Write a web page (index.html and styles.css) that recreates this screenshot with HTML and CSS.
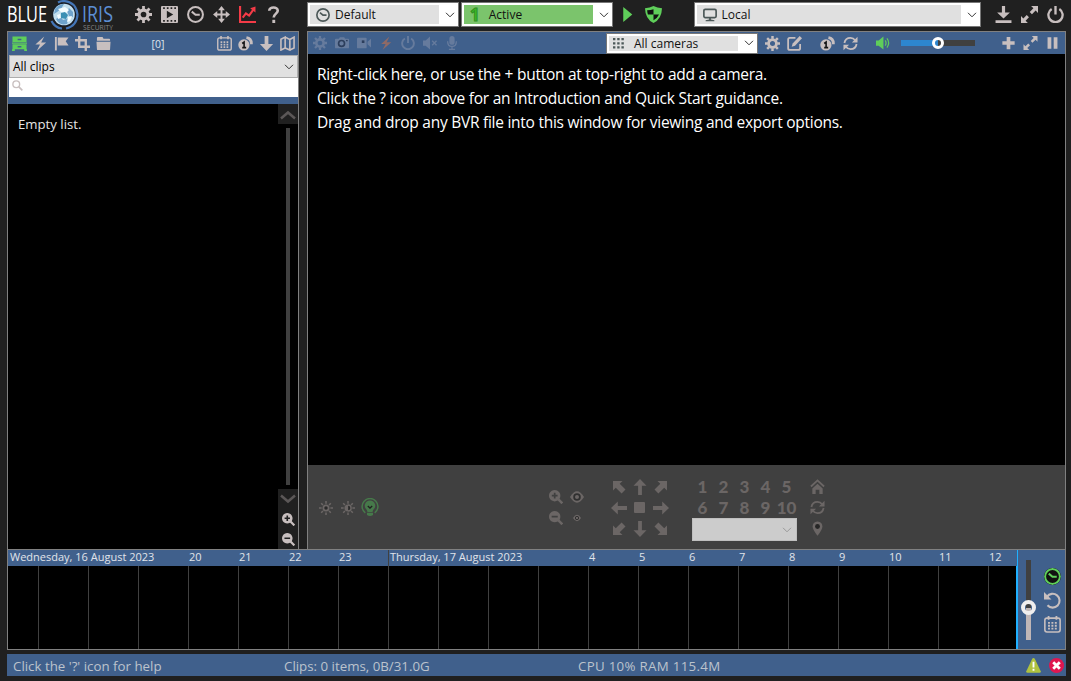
FILE: index.html
```html
<!DOCTYPE html>
<html lang="en">
  <head>
    <meta charset="utf-8">
    <title>Blue Iris</title>
    <link rel="stylesheet" href="styles.css">
  </head>
  <body>
    <!-- icon set -->
    <svg class="defs">
      <symbol id="gear" viewBox="0 0 16 16">
        <circle cx="8" cy="8" r="4.2" fill="none" stroke="currentColor" stroke-width="3"/>
        <path d="M8 0v3M8 13v3M0 8h3M13 8h3M2.300 2.300l2.200 2.200M11.500 11.500l2.200 2.200M13.700 2.300l-2.200 2.200M4.500 11.500l-2.200 2.200" stroke="currentColor" stroke-width="2.600"/>
      </symbol>
      <symbol id="film" viewBox="0 0 16 16">
        <path fill="currentColor" fill-rule="evenodd" d="M1 0h14q1 0 1 1v14q0 1-1 1H1q-1 0-1-1V1q0-1 1-1zM2 1.200v1.600h1.600v-1.600zM5.500 1.200v1.600h1.600v-1.600zM9 1.200v1.600h1.600v-1.600zM12.500 1.200v1.600h1.600v-1.600zM2 13.200v1.600h1.600v-1.600zM5.500 13.200v1.600h1.600v-1.600zM9 13.200v1.600h1.600v-1.600zM12.500 13.200v1.600h1.600v-1.600zM5.500 4.500v7l6-3.500z"/>
      </symbol>
      <symbol id="clock" viewBox="0 0 16 16">
        <circle cx="8" cy="8" r="7" fill="none" stroke="currentColor" stroke-width="1.900"/>
        <path d="M4.500 5.300L8 8.200h4" fill="none" stroke="currentColor" stroke-width="1.900"/>
      </symbol>
      <symbol id="move" viewBox="0 0 16 16">
        <path d="M8 2v12M2 8h12" stroke="currentColor" stroke-width="1.800"/>
        <path fill="currentColor" d="M8 0l3.200 4H4.800zM8 16l3.200-4H4.800zM0 8l4-3.200v6.400zM16 8l-4-3.200v6.400z"/>
      </symbol>
      <symbol id="chart" viewBox="0 0 16 16">
        <path d="M1 0v15h15M3.500 11l3-4 3 2 4-5.500" fill="none" stroke="currentColor" stroke-width="2"/>
        <path fill="currentColor" d="M10.500 2l5-1.500v5.500z"/>
      </symbol>
      <symbol id="question" viewBox="0 0 16 16">
        <path d="M4 4.500C4 .5 12 .2 12 4.500c0 2.500-3.800 3-3.800 6.300" fill="none" stroke="currentColor" stroke-width="2.500"/>
        <rect x="6.900" y="13" width="2.700" height="3" fill="currentColor"/>
      </symbol>
      <symbol id="chevron" viewBox="0 0 10 6">
        <path d="M1 .8l4 4 4-4" fill="none" stroke="currentColor" stroke-width="1"/>
      </symbol>
      <symbol id="play" viewBox="0 0 16 16"><path fill="currentColor" d="M4 1l8.500 7L4 15z"/></symbol>
      <symbol id="shield" viewBox="0 0 16 16">
        <path fill="currentColor" d="M8 0q3.500 2 8 2-.2 10-8 14Q.2 12 0 2q4.500 0 8-2z"/>
        <path fill="#111" d="M8 3v5H2.800q-.6-1.600-.8-4 3.500 0 6-1zM8 8h5.200q-1.500 3.400-5.200 5.500z"/>
      </symbol>
      <symbol id="monitor" viewBox="0 0 16 16">
        <rect x="1" y="1.500" width="14" height="9.500" rx="1.500" fill="none" stroke="currentColor" stroke-width="1.900"/>
        <path fill="currentColor" d="M7 11h2v2l4 1v1H3v-1l4-1z"/>
      </symbol>
      <symbol id="download" viewBox="0 0 16 16">
        <path fill="currentColor" d="M6.500 0h3v6H14l-6 5.800L2 6h4.500zM.5 13.300h15V16H.5z"/>
      </symbol>
      <symbol id="expand" viewBox="0 0 16 16">
        <path fill="currentColor" d="M9.500 0H16v6.500l-2.200-2.200-3.500 3.500-2.100-2.100 3.500-3.500zM6.500 16H0V9.500l2.200 2.200 3.200-3.200 2.100 2.100-3.200 3.200z"/>
      </symbol>
      <symbol id="power" viewBox="0 0 16 16">
        <path d="M4.400 2.800a6.700 6.700 0 1 0 7.200 0M8 0v8" fill="none" stroke="currentColor" stroke-width="2.200"/>
      </symbol>
      <symbol id="cabinet" viewBox="0 0 16 16">
        <path fill="currentColor" fill-rule="evenodd" d="M.5.500h15v6h-15zM6 3v1.500h4V3zM0 7h16v1.200H0zM.5 8.700h15v5.500h-15zM6 10.700v1.500h4v-1.500zM0 14h3v2H0zM13 14h3v2h-3z"/>
      </symbol>
      <symbol id="bolt" viewBox="0 0 16 16"><path fill="currentColor" d="M12 .5L2.500 9h5L4 16l10-9H8.700z"/></symbol>
      <symbol id="flag" viewBox="0 0 16 16">
        <path fill="currentColor" d="M1 1h2v14.500H1zM4 1.500h11.500l-3 4 3 4.500H4z"/>
      </symbol>
      <symbol id="crop" viewBox="0 0 16 16">
        <path d="M4.500 0v11.500H16M0 4.500h11.500V16" fill="none" stroke="currentColor" stroke-width="2.500"/>
      </symbol>
      <symbol id="folder" viewBox="0 0 16 16">
        <path fill="currentColor" d="M1 2q0-1 1-1h5l1 2h6q1 0 1 1v1H1zM.5 6h15l-.5 8q0 1-1 1H2q-1 0-1-1z"/>
      </symbol>
      <symbol id="calendar" viewBox="0 0 16 16">
        <rect x=".8" y="2" width="14.400" height="13" rx="2" fill="none" stroke="currentColor" stroke-width="1.500"/>
        <path d="M4.300 0v3.500M11.700 0v3.500" stroke="currentColor" stroke-width="1.700"/>
        <path d="M3.800 6.500h9M3.800 9.200h9M3.800 11.900h9" stroke="currentColor" stroke-width="1.700" stroke-dasharray="1.800 1.400"/>
      </symbol>
      <symbol id="coins" viewBox="0 0 16 16">
        <path d="M9 1.800q5.700 1 5.200 7" fill="none" stroke="currentColor" stroke-width="3"/>
        <circle cx="6.300" cy="9.500" r="6" fill="currentColor"/>
        <path d="M4.500 8l2-1.500v6M4.500 12.400h4.200" fill="none" stroke="#151515" stroke-width="1.700"/>
      </symbol>
      <symbol id="down" viewBox="0 0 16 16"><path fill="currentColor" d="M6 0h4v8.500h5l-7 7.500-7-7.500h5z"/></symbol>
      <symbol id="map" viewBox="0 0 16 16">
        <path d="M1 3.500L5.500 1.200v11.500L1 15zM5.500 1.200l5 2.500V15l-5-2.300M10.500 3.700L15 1.200v11.500L10.500 15" fill="none" stroke="currentColor" stroke-width="1.700"/>
      </symbol>
      <symbol id="search" viewBox="0 0 16 16">
        <circle cx="6.200" cy="6.200" r="4.900" fill="none" stroke="currentColor" stroke-width="2"/>
        <path d="M10 10l5 5" stroke="currentColor" stroke-width="2.400"/>
      </symbol>
      <symbol id="zoomin" viewBox="0 0 16 16">
        <path fill="currentColor" fill-rule="evenodd" d="M6.500 0a6.500 6.500 0 1 0 .01 0zM5.500 3.200h2v2.300h2.300v2H7.500v2.300h-2V7.500H3.200v-2h2.300z"/>
        <path d="M10.500 10.500l4.700 4.700" stroke="currentColor" stroke-width="2.800"/>
      </symbol>
      <symbol id="zoomout" viewBox="0 0 16 16">
        <path fill="currentColor" fill-rule="evenodd" d="M6.500 0a6.500 6.500 0 1 0 .01 0zM3 5.500h7v2H3z"/>
        <path d="M10.500 10.500l4.700 4.700" stroke="currentColor" stroke-width="2.800"/>
      </symbol>
      <symbol id="camera" viewBox="0 0 16 16">
        <path fill="currentColor" d="M1 3h3.500l1-1.500h5l1 1.500H15q1 0 1 1v9q0 1-1 1H1q-1 0-1-1V4q0-1 1-1z"/>
        <circle cx="7.500" cy="8.500" r="3.400" fill="none" stroke="#2c3e5c" stroke-width="1.900"/>
        <rect x="12.500" y="4.500" width="2" height="1.500" fill="#2c3e5c"/>
      </symbol>
      <symbol id="video" viewBox="0 0 16 16">
        <rect x="0" y="2" width="11" height="12" rx="1" fill="currentColor"/>
        <path fill="currentColor" d="M12 6.500L16 3v10l-4-3.500z"/>
        <rect x="5.500" y="5" width="3" height="3" fill="#2c3e5c"/>
      </symbol>
      <symbol id="mute" viewBox="0 0 16 16">
        <path fill="currentColor" d="M0 5h3l5-4.500v15L3 11H0z"/>
        <path d="M10.500 5.500l5 5M15.500 5.500l-5 5" stroke="currentColor" stroke-width="1.600"/>
      </symbol>
      <symbol id="mic" viewBox="0 0 16 16">
        <rect x="5" y="0" width="6" height="10" rx="3" fill="currentColor"/>
        <path d="M3 6q0 6 5 6t5-6M8 12v3M4.500 15.200h7" fill="none" stroke="currentColor" stroke-width="1.500"/>
      </symbol>
      <symbol id="dots" viewBox="0 0 12 12">
        <path d="M0 1.300h12M0 5.800h12M0 10.300h12" stroke="currentColor" stroke-width="2.500" stroke-dasharray="2.600 2"/>
      </symbol>
      <symbol id="edit" viewBox="0 0 16 16">
        <path d="M9 2H3Q1.200 2 1.200 4v9q0 1.800 1.800 1.800h9q2 0 2-1.800V8.500" fill="none" stroke="currentColor" stroke-width="1.900"/>
        <path fill="currentColor" d="M13.500 0L16 2.500 8.500 10.500 5 11.500 6 8z"/>
      </symbol>
      <symbol id="refresh" viewBox="0 0 16 16">
        <path d="M1.500 7.500Q2.500 2 8 2q3 0 5 2.500M14.500 8.500Q13.500 14 8 14q-3 0-5-2.500" fill="none" stroke="currentColor" stroke-width="1.900"/>
        <path fill="currentColor" d="M15.500.8v6h-6zM.5 15.200v-6h6z"/>
      </symbol>
      <symbol id="volume" viewBox="0 0 16 16">
        <path fill="currentColor" d="M0 5h3l5.500-4.500v15L3 11H0z"/>
        <path d="M10.500 5q2 3 0 6M12.500 2.800q4 5.200 0 10.400" fill="none" stroke="currentColor" stroke-width="1.400"/>
      </symbol>
      <symbol id="plus" viewBox="0 0 16 16"><path d="M8 1v14M1 8h14" stroke="currentColor" stroke-width="4.200"/></symbol>
      <symbol id="pause" viewBox="0 0 16 16"><path d="M4.500 1.500v13M11.500 1.500v13" stroke="currentColor" stroke-width="4.300"/></symbol>
      <symbol id="sun" viewBox="0 0 16 16">
        <circle cx="8" cy="8" r="3" fill="#2a2a2a" stroke="currentColor" stroke-width="2"/>
        <path d="M8 0v3M8 13v3M0 8h3M13 8h3M2.500 2.500l2 2M11.500 11.500l2 2M13.500 2.500l-2 2M4.500 11.500l-2 2" stroke="currentColor" stroke-width="1.800"/>
      </symbol>
      <symbol id="contrast" viewBox="0 0 16 16">
        <path fill="currentColor" d="M8 4a4 4 0 0 0 0 8z"/>
        <path fill="#2a2a2a" d="M8.500 5a3 3 0 0 1 0 6z"/>
        <path d="M8 4.500a3.500 3.500 0 0 1 0 7M8 0v3M8 13v3M0 8h3M13 8h3M2.500 2.500l2 2M11.500 11.500l2 2M13.500 2.500l-2 2M4.500 11.500l-2 2" fill="none" stroke="currentColor" stroke-width="1.700"/>
      </symbol>
      <symbol id="bulb" viewBox="0 0 18 18">
        <path d="M4.300 14.800a7.900 7.900 0 1 1 9.400 0" fill="none" stroke="currentColor" stroke-width="1.500"/>
        <path fill="currentColor" d="M9 2.500a5.200 5.200 0 0 1 3.200 9.300l-.7 2.200h-5l-.7-2.200A5.200 5.200 0 0 1 9 2.500zM6 14.700h6V17q-3 1.800-6 0z"/>
        <path d="M6.800 8l2.200 2 2.200-2" fill="none" stroke="#202020" stroke-width="1.300"/>
      </symbol>
      <symbol id="eye" viewBox="0 0 16 16">
        <path fill="currentColor" d="M0 8q8-13 16 0-8 13-16 0z"/>
        <circle cx="8" cy="8" r="3.300" fill="#6b6665" stroke="#303030" stroke-width="2"/>
      </symbol>
      <symbol id="arrow" viewBox="0 0 16 16"><path fill="currentColor" d="M8 0l6.500 6.800H9.900V16H6.100V6.800H1.500z"/></symbol>
      <symbol id="diag" viewBox="0 0 16 16"><path fill="currentColor" d="M2 2h9.500L8.700 4.800l5.800 5.800-3.900 3.900-5.800-5.800L2 11.500z"/></symbol>
      <symbol id="home" viewBox="0 0 16 16">
        <path d="M1 8l7-6.500L15 8" fill="none" stroke="currentColor" stroke-width="2"/>
        <path fill="currentColor" d="M8 5l5.500 5v6H10v-4.500H6V16H2.500v-6z"/>
      </symbol>
      <symbol id="pin" viewBox="0 0 16 16">
        <path fill="currentColor" d="M8 .5q5.200.3 5.200 5.300Q13.200 9 8 15.800 2.800 9 2.800 5.800 2.800.8 8 .5z"/>
        <circle cx="8" cy="5.800" r="2.600" fill="#262626"/>
      </symbol>
      <symbol id="undo" viewBox="0 0 16 16">
        <path d="M2.800 4.500A6.500 6.500 0 1 1 3.300 12.500" fill="none" stroke="currentColor" stroke-width="2"/>
        <path fill="currentColor" d="M0 0v7h7z"/>
      </symbol>
    </svg>

    <div class="topbar">
      <svg class="logo" viewBox="0 0 108 31">
        <text class="logo-blue" x="0" y="22" textLength="40" lengthAdjust="spacingAndGlyphs">BLUE</text>
        <circle cx="57" cy="14.500" r="11.500" fill="#10192c"/>
        <circle cx="57" cy="14.500" r="10.800" fill="#c3dfee"/>
        <path d="M48 9q4-5 9-5l-3 5-4 3-3 2zM49 19l4-3 3 4 6-2-2 6q-8 2-11-5zM62 8l4 4v5l-4-1-2-5z" fill="#6fa3cc"/>
        <path d="M51 9l7-2 4 3-3 3-5-1zM50 15l3-1 1 4-3 1zM61 17l4-1-2 5-3 1z" fill="#f4fcff"/>
        <path d="M54 13l4-1 3 3-2 4-5-1z" fill="#3b8fb4"/>
        <path d="M51 2.500A13.500 13.500 0 0 1 57 1Q69 2 70.500 14.500 70 26 59 28.500M55 28.500Q48 28 44.500 21" fill="none" stroke="#4476b8" stroke-width="2.200"/>
        <text class="logo-iris" x="75" y="22" textLength="31" lengthAdjust="spacingAndGlyphs">IRIS</text>
        <text class="logo-security" x="76" y="30" textLength="30" lengthAdjust="spacingAndGlyphs">SECURITY</text>
      </svg>
      <div class="icons main-icons">
        <svg><use href="#gear"/></svg>
        <svg><use href="#film"/></svg>
        <svg><use href="#clock"/></svg>
        <svg><use href="#move"/></svg>
        <svg class="red"><use href="#chart"/></svg>
        <svg><use href="#question"/></svg>
      </div>
      <div class="select profile">
        <div class="value"><svg><use href="#clock"/></svg>Default</div>
        <svg class="chevron"><use href="#chevron"/></svg>
      </div>
      <div class="select schedule">
        <div class="value"><span class="one">1</span>Active</div>
        <svg class="chevron"><use href="#chevron"/></svg>
      </div>
      <div class="icons run-icons">
        <svg><use href="#play"/></svg>
        <svg><use href="#shield"/></svg>
      </div>
      <div class="select server">
        <div class="value"><svg><use href="#monitor"/></svg>Local</div>
        <svg class="chevron"><use href="#chevron"/></svg>
      </div>
      <div class="icons window-icons">
        <svg><use href="#download"/></svg>
        <svg><use href="#expand"/></svg>
        <svg><use href="#power"/></svg>
      </div>
    </div>

    <div class="panels">
      <div class="clips">
        <div class="clips-toolbar">
          <div class="icons small">
            <svg class="green"><use href="#cabinet"/></svg>
            <svg><use href="#bolt"/></svg>
            <svg><use href="#flag"/></svg>
            <svg><use href="#crop"/></svg>
            <svg><use href="#folder"/></svg>
          </div>
          <span class="count">[0]</span>
          <div class="icons small">
            <svg><use href="#calendar"/></svg>
            <svg><use href="#coins"/></svg>
            <svg><use href="#down"/></svg>
            <svg><use href="#map"/></svg>
          </div>
        </div>
        <div class="clips-filter">All clips<svg class="chevron"><use href="#chevron"/></svg></div>
        <div class="clips-search"><svg><use href="#search"/></svg></div>
        <div class="clips-list">
          <div class="empty">Empty list.</div>
          <div class="scroll">
            <div class="scroll-up"><svg viewBox="0 0 16 10"><path d="M1 8.500l7-6 7 6"/></svg></div>
            <div class="track"></div>
            <div class="scroll-down">
              <svg class="arrow" viewBox="0 0 16 10"><path d="M1 1.500l7 6 7-6"/></svg>
              <svg class="zoom"><use href="#zoomin"/></svg>
              <svg class="zoom"><use href="#zoomout"/></svg>
            </div>
          </div>
        </div>
      </div>

      <div class="cameras">
        <div class="cam-toolbar">
          <div class="icons cam-icons">
            <svg><use href="#gear"/></svg>
            <svg><use href="#camera"/></svg>
            <svg><use href="#video"/></svg>
            <svg class="alert"><use href="#bolt"/></svg>
            <svg><use href="#power"/></svg>
            <svg><use href="#mute"/></svg>
            <svg><use href="#mic"/></svg>
          </div>
          <div class="select group">
            <div class="value"><svg><use href="#dots"/></svg>All cameras</div>
            <svg class="chevron"><use href="#chevron"/></svg>
          </div>
          <div class="icons small group-icons">
            <svg><use href="#gear"/></svg>
            <svg><use href="#edit"/></svg>
          </div>
          <div class="icons small cycle-icons">
            <svg><use href="#coins"/></svg>
            <svg><use href="#refresh"/></svg>
          </div>
          <svg class="volume"><use href="#volume"/></svg>
          <div class="slider"><div class="knob"></div></div>
          <div class="icons small view-icons">
            <svg><use href="#plus"/></svg>
            <svg><use href="#expand"/></svg>
            <svg><use href="#pause"/></svg>
          </div>
        </div>
        <div class="view">
          <p>Right-click here, or use the + button at top-right to add a camera.</p>
          <p>Click the ? icon above for an Introduction and Quick Start guidance.</p>
          <p>Drag and drop any BVR file into this window for viewing and export options.</p>
        </div>
        <div class="ptz">
          <div class="lights">
            <svg><use href="#sun"/></svg>
            <svg><use href="#contrast"/></svg>
            <svg class="bulb"><use href="#bulb"/></svg>
          </div>
          <div class="lens">
            <svg><use href="#zoomin"/></svg>
            <svg><use href="#eye"/></svg>
            <svg><use href="#zoomout"/></svg>
            <svg class="tiny"><use href="#eye"/></svg>
          </div>
          <div class="pad">
            <svg><use href="#diag"/></svg>
            <svg><use href="#arrow"/></svg>
            <svg class="r90"><use href="#diag"/></svg>
            <svg class="r270"><use href="#arrow"/></svg>
            <span class="stop"></span>
            <svg class="r90"><use href="#arrow"/></svg>
            <svg class="r270"><use href="#diag"/></svg>
            <svg class="r180"><use href="#arrow"/></svg>
            <svg class="r180"><use href="#diag"/></svg>
          </div>
          <div class="presets">
            <div class="numbers">
              <span>1</span><span>2</span><span>3</span><span>4</span><span>5</span>
              <span>6</span><span>7</span><span>8</span><span>9</span><span>10</span>
            </div>
            <div class="preset-select"><svg class="chevron"><use href="#chevron"/></svg></div>
          </div>
          <div class="places">
            <svg><use href="#home"/></svg>
            <svg><use href="#refresh"/></svg>
            <svg><use href="#pin"/></svg>
          </div>
        </div>
      </div>
    </div>

    <div class="timeline">
      <div class="hours">
        <div class="header">
          <span class="day first">Wednesday, 16 August 2023</span>
          <span>20</span><span>21</span><span>22</span><span>23</span>
          <span class="day">Thursday, 17 August 2023</span>
          <span>4</span><span>5</span><span>6</span><span>7</span><span>8</span><span>9</span><span>10</span><span>11</span><span>12</span>
        </div>
        <div class="cells">
          <i></i><i></i><i></i><i></i><i></i><i></i><i></i><i></i><i></i><i></i>
          <i></i><i></i><i></i><i></i><i></i><i></i><i></i><i></i><i></i><i></i><i></i>
        </div>
      </div>
      <div class="tools">
        <div class="vslider"><div class="knob"></div></div>
        <div class="tool-icons">
          <svg class="live"><use href="#clock"/></svg>
          <svg><use href="#undo"/></svg>
          <svg><use href="#calendar"/></svg>
        </div>
      </div>
    </div>

    <div class="status">
      <span class="help">Click the '?' icon for help</span>
      <span class="disk">Clips: 0 items, 0B/31.0G</span>
      <span class="cpu">CPU 10% RAM 115.4M</span>
      <svg class="warn" viewBox="0 0 16 16">
        <path d="M8 0q1 0 1.500 1L15.700 14q.3 1.700-1.200 1.700h-13Q0 15.700.3 14L6.500 1Q7 0 8 0z" fill="#afc23f"/>
        <path d="M8 4v6M8 11.500v2" stroke="#fff" stroke-width="2"/>
      </svg>
      <svg class="error" viewBox="0 0 16 16">
        <circle cx="8" cy="8" r="8" fill="#e0164f"/>
        <path d="M4.500 4.500l7 7M11.500 4.500l-7 7" stroke="#fff" stroke-width="3"/>
      </svg>
    </div>
  </body>
</html>
```
FILE: styles.css
```css
* {
  box-sizing: border-box;
}
body {
  margin: 0;
  width: 1071px;
  height: 681px;
  overflow: hidden;
  background: #202020;
  color: #c8bfbf;
  font-family: "Open Sans", "Noto Sans", sans-serif;
  font-size: 12px;
}
svg {
  display: block;
  flex: none;
}
.defs {
  display: none;
}
.icons {
  display: flex;
  align-items: center;
}
.icons svg {
  width: 17px;
  height: 17px;
}
.small svg {
  width: 15px;
  height: 15px;
}
.green {
  color: #5fce5a;
}
.red {
  color: #f43b47;
}

/* top bar */
.topbar {
  display: flex;
  align-items: center;
  height: 31px;
  padding: 0 7px 2px 7px;
}
.logo {
  width: 108px;
  height: 31px;
  margin-top: 2px;
}
.logo-blue {
  font-size: 21px;
  fill: #fff;
}
.logo-iris {
  font-size: 21px;
  fill: #5d8fd3;
}
.logo-security {
  font-size: 7px;
  fill: #858585;
}
.main-icons {
  gap: 9px;
  margin-left: 20px;
}
.select {
  display: flex;
  align-items: center;
  height: 25px;
  padding: 2px;
  background: #fff;
  border: 1px solid #777;
  color: #111;
}
.select .value {
  display: flex;
  align-items: center;
  flex: 1;
  height: 19px;
  background: #e0e0e0;
}
.select .value svg {
  width: 14px;
  height: 14px;
  margin: 0 5px 0 6px;
  color: #4c5858;
}
.chevron {
  width: 10px;
  height: 6px;
  color: #333;
}
.select .chevron {
  margin: 0 1px 0 6px;
}
.profile {
  width: 152px;
  margin-left: 25px;
}
.schedule {
  width: 152px;
  margin-left: 2px;
}
.schedule .value {
  background: #7bc46c;
}
.one {
  width: 25px;
  padding-right: 3px;
  color: #3cbc26;
  font-size: 17px;
  font-weight: bold;
  text-align: center;
  line-height: 19px;
  -webkit-text-stroke: 1px #318f23;
}
.run-icons {
  gap: 9px;
  margin-left: 6px;
  color: #5fce5a;
}
.server {
  width: 288px;
  margin-left: 32px;
}
.window-icons {
  gap: 9px;
  margin-left: 14px;
}

/* clips and camera panels */
.panels {
  display: flex;
  gap: 8px;
  height: 519px;
  padding-left: 7px;
}
.clips {
  display: flex;
  flex-direction: column;
  width: 292px;
  border: 1px solid #808080;
  background: #40608c;
}
.clips-toolbar {
  display: flex;
  align-items: center;
  justify-content: space-between;
  height: 23px;
  padding: 0 3px 0 4px;
}
.clips-toolbar .icons {
  gap: 6px;
}
.count {
  color: #dfe4ec;
  font-size: 10.5px;
  margin-left: -12px;
}
.clips-filter {
  display: flex;
  align-items: center;
  justify-content: space-between;
  height: 23px;
  margin-left: 1px;
  padding: 0 3px;
  background: #e1e1e1;
  border: 1px solid #adadad;
  color: #000;
}
.clips-search {
  height: 19px;
  margin: 0 0 7px 1px;
  padding: 2px 3px;
  background: #fff;
  color: #c8bfbf;
}
.clips-search svg {
  width: 11px;
  height: 11px;
}
.clips-list {
  display: flex;
  flex: 1;
  background: #000;
}
.empty {
  flex: 1;
  padding: 12px 10px;
  color: #e5e5e5;
  font-size: 13.2px;
  line-height: 17px;
}
.scroll {
  display: flex;
  flex-direction: column;
  align-items: center;
  width: 20px;
}
.scroll-up,
.scroll-down {
  display: flex;
  flex-direction: column;
  align-items: center;
  width: 20px;
  background: #202020;
}
.scroll-up {
  height: 20px;
  padding-top: 6px;
}
.scroll-up svg,
.scroll .arrow {
  width: 16px;
  height: 10px;
  fill: none;
  stroke: #5b5757;
  stroke-width: 2.5;
}
.track {
  flex: 1;
  width: 4px;
  margin: 4px 0;
  background: #404040;
}
.scroll-down {
  height: 60px;
  padding-top: 5px;
  gap: 7px;
}
.scroll-down .zoom {
  width: 13px;
  height: 13px;
}
.scroll-down .arrow {
  margin-bottom: 2px;
}
.cameras {
  display: flex;
  flex-direction: column;
  width: 759px;
  border: 1px solid #808080;
  background: #000;
}
.cam-toolbar {
  display: flex;
  align-items: center;
  height: 22px;
  background: #40608c;
}
.cam-icons {
  gap: 8px;
  margin-left: 5px;
  color: #667b9d;
}
.cam-icons svg {
  width: 14px;
  height: 14px;
}
.cam-icons .alert {
  color: #8f6a66;
}
.group {
  width: 152px;
  height: 21px;
  margin-left: 147px;
}
.group .value {
  height: 15px;
}
.group .value svg {
  width: 11px;
  height: 11px;
  margin: 0 10px 0 4px;
}
.group-icons {
  gap: 7px;
  margin-left: 7px;
}
.cycle-icons {
  gap: 8px;
  margin-left: 18px;
}
.volume {
  width: 16px;
  height: 14px;
  margin-left: 17px;
  color: #5fce5a;
}
.slider {
  width: 74px;
  height: 6px;
  margin-left: 10px;
  background: linear-gradient(90deg, #2d86cf 37px, #404040 37px);
}
.knob {
  width: 12px;
  height: 12px;
  border: 3px solid #fff;
  border-radius: 50%;
}
.slider .knob {
  margin: -3px 0 0 31px;
}
.view-icons {
  gap: 7px;
  margin-left: 26px;
}
.view-icons svg {
  height: 14px;
}
.view {
  flex: 1;
  padding: 8px 9px;
  color: #fff;
  font-size: 15.5px;
  letter-spacing: -0.26px;
}
.view p {
  margin: 0;
  line-height: 24px;
  white-space: nowrap;
}

/* ptz controls */
.ptz {
  display: flex;
  height: 84px;
  background: #404040;
  color: #6b6665;
}
.lights {
  display: flex;
  align-items: center;
  gap: 8px;
  margin: 1px 0 0 11px;
}
.lights svg {
  width: 14px;
  height: 14px;
}
.lights .bulb {
  width: 18px;
  height: 18px;
  margin: -2px 0 0 -2px;
  color: #46794a;
}
.lens {
  display: grid;
  grid-template-columns: 21px 21px;
  grid-template-rows: 21px 21px;
  place-items: center;
  margin: 21px 0 0 166px;
}
.lens svg {
  width: 14px;
  height: 14px;
}
.lens .tiny {
  width: 8px;
  height: 8px;
}
.pad {
  display: grid;
  grid-template-columns: repeat(3, 21px);
  grid-template-rows: repeat(3, 21px);
  place-items: center;
  margin: 11px 0 0 21px;
}
.pad svg {
  width: 16px;
  height: 16px;
}
.r90 {
  transform: rotate(90deg);
}
.r180 {
  transform: rotate(180deg);
}
.r270 {
  transform: rotate(270deg);
}
.stop {
  width: 11px;
  height: 11px;
  border-radius: 1px;
  background: #6b6665;
}
.presets {
  width: 105px;
  margin: 11px 0 0 21px;
}
.numbers {
  display: grid;
  grid-template-columns: repeat(5, 21px);
  justify-items: center;
  font-family: Lato, sans-serif;
  font-size: 17px;
  font-weight: 900;
  line-height: 21px;
}
.preset-select {
  display: flex;
  align-items: center;
  justify-content: flex-end;
  height: 23px;
  padding-right: 4px;
  background: #ccc;
  border: 1px solid #bfbfbf;
}
.preset-select .chevron {
  color: #999;
}
.places {
  display: flex;
  flex-direction: column;
  gap: 6px;
  margin: 14px 0 0 13px;
}
.places svg {
  width: 15px;
  height: 15px;
}

/* timeline */
.timeline {
  display: flex;
  width: 1059px;
  height: 101px;
  margin: -1px 0 0 7px;
  border: 1px solid #808080;
}
.hours {
  width: 1010px;
  background: #000;
  border-right: 2px solid #1fb0ff;
}
.header {
  display: flex;
  width: 1009px;
  height: 16px;
  background: #40608c;
  color: #e0e4ea;
  font-size: 11px;
  line-height: 14px;
  white-space: nowrap;
}
.header span {
  width: 50px;
  padding-left: 1px;
}
.header span:last-child {
  width: 29px;
}
.header .day {
  width: 200px;
  border-left: 1px solid #404040;
}
.header .first {
  width: 180px;
  border: 0;
  padding-left: 2px;
}
.cells {
  display: flex;
  height: 83px;
}
.cells i {
  width: 50px;
  border-left: 1px solid #404040;
}
.cells i:first-child {
  width: 30px;
  border: 0;
}
.cells i:last-child {
  width: 28px;
}
.tools {
  display: flex;
  flex: 1;
  background: #40608c;
}
.vslider {
  width: 5px;
  height: 80px;
  margin: 10px 0 0 8px;
  background: linear-gradient(#404040 48px, #c0b6b6 48px);
}
.vslider .knob {
  width: 15px;
  height: 15px;
  margin: 40px 0 0 -5px;
  border-width: 4px;
  border-color: #f0eeee;
}
.tool-icons {
  display: flex;
  flex-direction: column;
  gap: 7px;
  margin: 18px 0 0 13px;
}
.tool-icons svg {
  width: 17px;
  height: 17px;
}
.live {
  border-radius: 50%;
  background: #111;
  color: #5fce5a;
}

/* status bar */
.status {
  display: flex;
  align-items: center;
  width: 1059px;
  height: 22px;
  margin: 4px 0 0 7px;
  padding: 1px 2px 0 6px;
  background: #40608c;
  color: #bcc3cc;
  font-size: 13.3px;
  white-space: nowrap;
}
.status .help {
  width: 271px;
}
.status .disk {
  width: 294px;
}
.status .cpu {
  flex: 1;
  letter-spacing: 0.3px;
}
.status svg {
  width: 15px;
  height: 15px;
}
.status .error {
  margin-left: 8px;
}
```
